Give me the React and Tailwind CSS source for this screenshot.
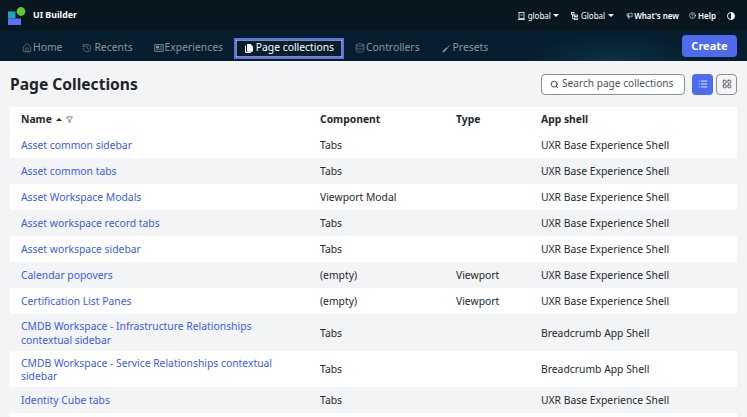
import React from "react";
import { Home, History, Database, Search, List, LayoutGrid, Megaphone, CircleHelp, Filter } from "lucide-react";

const rows = [
  ["Asset common sidebar", "Tabs", "", "UXR Base Experience Shell"],
  ["Asset common tabs", "Tabs", "", "UXR Base Experience Shell"],
  ["Asset Workspace Modals", "Viewport Modal", "", "UXR Base Experience Shell"],
  ["Asset workspace record tabs", "Tabs", "", "UXR Base Experience Shell"],
  ["Asset workspace sidebar", "Tabs", "", "UXR Base Experience Shell"],
  ["Calendar popovers", "(empty)", "Viewport", "UXR Base Experience Shell"],
  ["Certification List Panes", "(empty)", "Viewport", "UXR Base Experience Shell"],
  ["CMDB Workspace - Infrastructure Relationships contextual sidebar", "Tabs", "", "Breadcrumb App Shell"],
  ["CMDB Workspace - Service Relationships contextual sidebar", "Tabs", "", "Breadcrumb App Shell"],
  ["Identity Cube tabs", "Tabs", "", "UXR Base Experience Shell"],
  ["", "", "", ""],
];

function Caret() {
  return <span className="inline-block h-0 w-0 border-x-[3px] border-t-[3.5px] border-x-transparent border-t-white" />;
}

function ExpIcon({ size = 10 }) {
  return (
    <svg width={size} height={size} viewBox="0 0 12 12" fill="none" stroke="currentColor">
      <rect x="1" y="2" width="10" height="8" />
      <rect x="2.5" y="3.5" width="3.5" height="3" fill="currentColor" stroke="none" />
      <path d="M7 4h3M7 6h3M2.5 8h7.5" strokeWidth="0.8" />
    </svg>
  );
}

function WandIcon({ size = 10 }) {
  return (
    <svg width={size} height={size} viewBox="0 0 11 11" fill="none" stroke="currentColor" strokeLinecap="round">
      <path d="M1.5 9.5 L5.5 5.5" strokeWidth="1.6" />
      <path d="M6.5 4.5 L8 3" strokeWidth="1.1" />
    </svg>
  );
}

function PagesIcon() {
  return (
    <svg width="10" height="11" viewBox="0 0 10 11" fill="white">
      <path d="M1 2.5h1V8.8h5V10H2a1 1 0 0 1-1-1z" />
      <path d="M3 1h3.5L9 3.5V8a.8.8 0 0 1-.8.8H3.8A.8.8 0 0 1 3 8z" />
    </svg>
  );
}

function Tab({ icon: I, label, gap = "gap-[1px]" }) {
  return (
    <div className={`flex h-[26px] items-center ${gap} text-[#8d979f]`}>
      <I size={10} strokeWidth={1.4} />
      <span>{label}</span>
    </div>
  );
}

function TinyBuilding() {
  return (
    <svg width="7" height="8" viewBox="0 0 7 8" fill="none" stroke="white" strokeWidth="0.8">
      <rect x="1" y="0.5" width="5" height="6" />
      <path d="M0 7.5h7M2.5 3h2" />
    </svg>
  );
}

function TinyTree() {
  return (
    <svg width="7" height="8" viewBox="0 0 7 8" fill="none" stroke="white" strokeWidth="0.8">
      <rect x="0.5" y="0.5" width="2.5" height="1.8" />
      <rect x="3.5" y="3" width="3" height="1.6" />
      <rect x="3.5" y="6" width="3" height="1.6" />
      <path d="M1.5 2.3V6.8H3.5M1.5 3.8H3.5" />
    </svg>
  );
}

export default function App() {
  return (
    <div className="flex h-[417px] w-[747px] flex-col overflow-hidden bg-[#f3f4f6] font-['Noto_Sans',sans-serif] text-[10.35px] text-[#24292e]">
      <header className="flex h-[31px] items-center justify-between bg-[#08161f] pl-[8px] pr-[12px] text-white">
        <div className="flex items-center gap-[7px]">
          <svg width="18" height="18" viewBox="0 0 18 18">
            <rect x="0" y="4.5" width="7.5" height="7" fill="#1ba7c4" />
            <rect x="0" y="11.5" width="13" height="6.5" fill="#5f6ef6" />
            <circle cx="13" cy="4.5" r="4.4" fill="#5fc72f" />
          </svg>
          <span className="text-[8.8px] font-bold">UI Builder</span>
        </div>
        <div className="flex items-center text-[8px] font-semibold">
          <div className="flex items-center">
            <TinyBuilding />
            <span className="ml-[3px] mr-[2px] font-normal">global</span>
            <Caret />
          </div>
          <div className="ml-[12px] flex items-center">
            <TinyTree />
            <span className="ml-[3px] mr-[3px] font-normal">Global</span>
            <Caret />
          </div>
          <div className="ml-[12px] flex items-center gap-[1px]">
            <Megaphone size={7} />
            <span>What's new</span>
          </div>
          <div className="ml-[10px] flex items-center gap-[2px]">
            <CircleHelp size={7} />
            <span>Help</span>
          </div>
          <svg className="ml-[11px]" width="8" height="8" viewBox="0 0 8 8">
            <circle cx="4" cy="4" r="3.5" fill="none" stroke="white" />
            <path d="M4 0.5 A3.5 3.5 0 0 1 4 7.5 Z" fill="white" />
          </svg>
        </div>
      </header>

      <nav className="flex h-[30px] items-center justify-between bg-[#051d2c] bg-[radial-gradient(ellipse_90px_30px_at_82%_100%,#0b3146_0%,#051d2c_100%)] pl-[22px] pr-[10px]">
        <div className="mt-[4px] flex items-center">
          <Tab icon={Home} label="Home" />
          <div className="w-[20px]" />
          <Tab icon={History} label="Recents" gap="gap-[2px]" />
          <div className="w-[21px]" />
          <Tab icon={ExpIcon} label="Experiences" />
          <div className="w-[11px]" />
          <div className="flex h-[21px] w-[110px] items-center justify-center gap-[2px] border-2 border-[#5b74e6] text-white shadow-[inset_0_0_0_0.5px_#ffffff]">
            <PagesIcon />
            <span>Page collections</span>
          </div>
          <div className="w-[11px]" />
          <Tab icon={Database} label="Controllers" />
          <div className="w-[22px]" />
          <Tab icon={WandIcon} label="Presets" />
        </div>
        <button className="h-[22px] w-[55px] rounded-[4px] bg-[#4f6bed] text-[11px] font-bold text-white">Create</button>
      </nav>

      <main className="flex min-h-0 flex-1 flex-col px-[10px]">
        <div className="flex h-[46px] shrink-0 items-center justify-between">
          <h1 className="pt-[2px] text-[15.6px] font-bold text-[#1f2428]">Page Collections</h1>
          <div className="flex items-center">
            <div className="flex h-[21px] w-[144px] items-center gap-[3px] rounded-[4px] border border-[#8b9096] bg-white pl-[8px] text-[10.15px] text-[#4b5258]">
              <Search size={9} className="text-[#24292e]" strokeWidth={2.2} />
              <span>Search page collections</span>
            </div>
            <div className="ml-[7px] flex h-[21px] w-[21px] items-center justify-center rounded-[4px] bg-[#4f6bed] text-white">
              <List size={10} />
            </div>
            <div className="ml-[3px] flex h-[21px] w-[21px] items-center justify-center rounded-[4px] border border-[#8b9096] text-[#4b5258]">
              <LayoutGrid size={10} />
            </div>
          </div>
        </div>

        <div className="bg-white">
          <div className="grid h-[25px] grid-cols-[299px_136px_85px_1fr] items-center pl-[11px] pt-[1px] font-bold">
            <div className="flex items-center">
              Name
              <span className="ml-[4px] inline-block h-0 w-0 border-x-[3px] border-b-[3.5px] border-x-transparent border-b-[#24292e]" />
              <Filter size={7} className="ml-[4px]" />
            </div>
            <div>Component</div>
            <div>Type</div>
            <div>App shell</div>
          </div>
          {rows.map((r, i) => (
            <div
              key={i}
              className={`grid min-h-[26px] grid-cols-[299px_136px_85px_1fr] items-center pl-[11px] leading-[13.5px] ${i % 2 === 0 ? "bg-white" : "bg-[#f3f4f6]"} ${r[0].length > 40 ? "pb-[3.5px] pt-[6px]" : "pt-[2px]"}`}
            >
              <div className="w-[262px] text-[#3c5ce6]">{r[0]}</div>
              <div>{r[1]}</div>
              <div>{r[2]}</div>
              <div>{r[3]}</div>
            </div>
          ))}
        </div>
      </main>
    </div>
  );
}
